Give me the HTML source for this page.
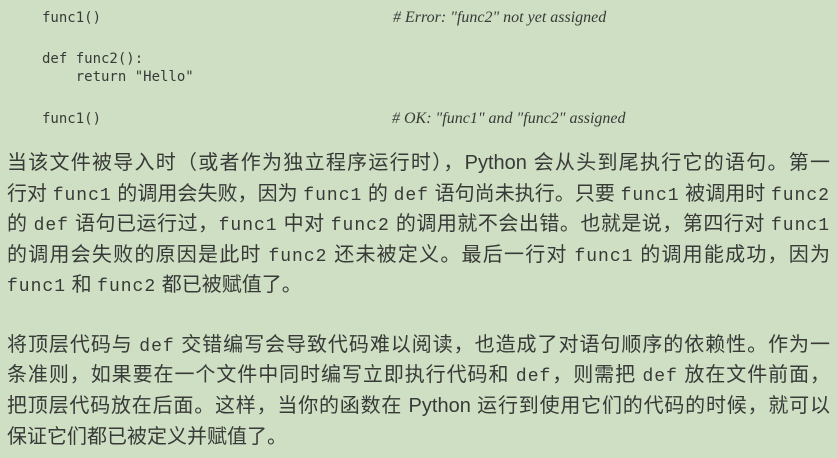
<!DOCTYPE html>
<html><head><meta charset="utf-8"><style>
html,body{margin:0;padding:0;}
body{width:837px;height:458px;background:#cfdfc4;position:relative;overflow:hidden;color:#383a37;}
.c{position:absolute;font-family:"DejaVu Sans Mono","Liberation Mono",monospace;font-size:14px;white-space:pre;line-height:18px;}
.m{position:absolute;font-family:"Liberation Serif",serif;font-style:italic;font-size:16px;line-height:18px;white-space:pre;}
.l{position:absolute;left:7px;width:823px;font-family:"Liberation Sans","Noto Sans CJK SC",sans-serif;font-size:20px;line-height:24px;text-align:justify;text-align-last:justify;white-space:nowrap;}
.l.e{text-align-last:left;}
.l code{font-family:"Liberation Mono",monospace;font-size:18px;letter-spacing:1px;}
</style></head><body>
<div class="c" style="left:42px;top:9px">func1()</div>
<div class="m" style="left:393px;top:9px"># Error: "func2" not yet assigned</div>
<div class="c" style="left:42px;top:50px">def func2():
    return "Hello"</div>
<div class="c" style="left:42px;top:110px">func1()</div>
<div class="m" style="left:392px;top:110px"># OK: "func1" and "func2" assigned</div>

<div class="l" style="top:151px">当该文件被导入时（或者作为独立程序运行时），Python 会从头到尾执行它的语句。第一</div>
<div class="l" style="top:182px">行对 <code>func1</code> 的调用会失败，因为 <code>func1</code> 的 <code>def</code> 语句尚未执行。只要 <code>func1</code> 被调用时 <code>func2</code></div>
<div class="l" style="top:212px">的 <code>def</code> 语句已运行过，<code>func1</code> 中对 <code>func2</code> 的调用就不会出错。也就是说，第四行对 <code>func1</code></div>
<div class="l" style="top:243px">的调用会失败的原因是此时 <code>func2</code> 还未被定义。最后一行对 <code>func1</code> 的调用能成功，因为</div>
<div class="l e" style="top:273px"><code>func1</code> 和 <code>func2</code> 都已被赋值了。</div>

<div class="l" style="top:333px">将顶层代码与 <code>def</code> 交错编写会导致代码难以阅读，也造成了对语句顺序的依赖性。作为一</div>
<div class="l" style="top:363px">条准则，如果要在一个文件中同时编写立即执行代码和 <code>def</code>，则需把 <code>def</code> 放在文件前面，</div>
<div class="l" style="top:394px">把顶层代码放在后面。这样，当你的函数在 Python 运行到使用它们的代码的时候，就可以</div>
<div class="l e" style="top:425px">保证它们都已被定义并赋值了。</div>
</body></html>
